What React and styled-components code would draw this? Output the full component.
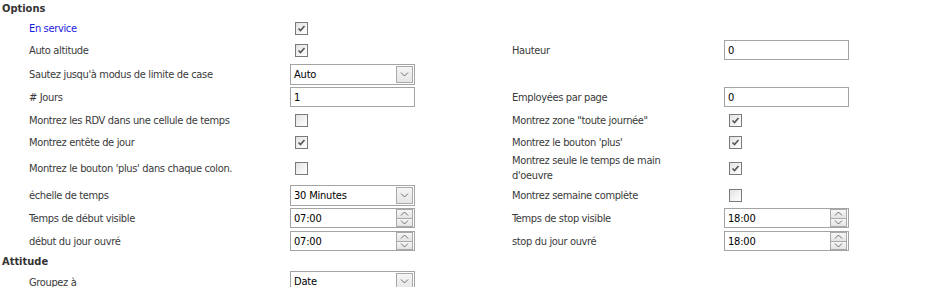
import React from 'react';
import styled, { createGlobalStyle } from 'styled-components';

const Global = createGlobalStyle`
  * { box-sizing: border-box; }
  body {
    margin: 0;
    background: #fff;
    font-family: "DejaVu Sans Condensed", "DejaVu Sans", sans-serif;
    font-size: 11px;
    letter-spacing: -0.35px;
    color: #3a3a3a;
  }
`;

const Page = styled.div`
  padding: 0 0 0 2px;
`;

const Header = styled.div`
  font-weight: bold;
  color: #333;
  letter-spacing: 0;
  height: ${p => p.h || 17}px;
  line-height: ${p => p.h || 17}px;
`;

const Grid = styled.div`
  display: grid;
  grid-template-columns: 261px 222px 212px 125px;
  padding-left: 27px;
  align-items: center;
`;

const Cell = styled.div`
  min-height: 22px;
  display: flex;
  align-items: center;
  line-height: 15px;
  color: ${p => (p.link ? '#1a1adf' : 'inherit')};
  max-width: ${p => (p.wrap ? `${p.wrap}px` : 'none')};
`;

const Box = styled.span`
  width: 13px;
  height: 13px;
  margin-left: 5px;
  border: 1px solid #7a7a7a;
  background: linear-gradient(135deg, #e2e2e2 0%, #f7f7f7 70%, #ffffff 100%);
  display: flex;
  align-items: center;
  justify-content: center;
`;

const Check = ({ on }) => (
  <Box>
    {on && (
      <svg width="9" height="9" viewBox="0 0 9 9">
        <path d="M1.5 4.5 L3.5 6.5 L7.5 2" fill="none" stroke="#555" strokeWidth="1.6" />
      </svg>
    )}
  </Box>
);

const Field = styled.div`
  width: 125px;
  height: ${p => p.h || 20}px;
  margin: ${p => p.m || '1px 0 2px'};
  border: 1px solid #a4a4a4;
  background: #fff;
  display: flex;
  align-items: center;
  justify-content: space-between;
  padding: 0 1px 0 3px;
  color: #000;
  letter-spacing: -0.2px;
`;

const ArrowBtn = styled.span`
  width: 17px;
  height: 17px;
  border: 1px solid #a9a9a9;
  background: linear-gradient(#f4f4f4, #e6e6e6);
  display: flex;
  align-items: center;
  justify-content: center;
`;

const Spin = styled.span`
  width: 17px;
  height: 18px;
  display: flex;
  flex-direction: column;
`;

const SpinHalf = styled.span`
  flex: 1;
  border: 1px solid #a9a9a9;
  border-top-width: ${p => (p.down ? 0 : 1)}px;
  background: linear-gradient(#f6f6f6, #e4e4e4);
  display: flex;
  align-items: center;
  justify-content: center;
`;

const Chevron = ({ up }) => (
  <svg width="9" height="5" viewBox="0 0 9 5">
    <path
      d={up ? 'M1 4.5 L4.5 1 L8 4.5' : 'M1 0.5 L4.5 4 L8 0.5'}
      fill="none"
      stroke="#6e6e6e"
      strokeWidth="1"
    />
  </svg>
);

const Select = ({ value, m }) => (
  <Field h={21} m={m || '2px 0 1px'}>
    <span>{value}</span>
    <ArrowBtn>
      <Chevron />
    </ArrowBtn>
  </Field>
);

const Text = ({ value }) => (
  <Field>
    <span>{value}</span>
  </Field>
);

const Time = ({ value }) => (
  <Field>
    <span>{value}</span>
    <Spin>
      <SpinHalf>
        <Chevron up />
      </SpinHalf>
      <SpinHalf down>
        <Chevron />
      </SpinHalf>
    </Spin>
  </Field>
);

const Empty = () => <Cell />;

export default function App() {
  return (
    <Page>
      <Global />
      <Header>Options</Header>
      <Grid>
        <Cell link>En service</Cell>
        <Cell><Check on /></Cell>
        <Empty />
        <Empty />

        <Cell>Auto altitude</Cell>
        <Cell><Check on /></Cell>
        <Cell>Hauteur</Cell>
        <Cell><Text value="0" /></Cell>

        <Cell>Sautez jusqu'à modus de limite de case</Cell>
        <Cell><Select value="Auto" /></Cell>
        <Empty />
        <Empty />

        <Cell># Jours</Cell>
        <Cell><Text value="1" /></Cell>
        <Cell>Employées par page</Cell>
        <Cell><Text value="0" /></Cell>

        <Cell>Montrez les RDV dans une cellule de temps</Cell>
        <Cell><Check /></Cell>
        <Cell>Montrez zone "toute journée"</Cell>
        <Cell><Check on /></Cell>

        <Cell>Montrez entête de jour</Cell>
        <Cell><Check on /></Cell>
        <Cell>Montrez le bouton 'plus'</Cell>
        <Cell><Check on /></Cell>

        <Cell>Montrez le bouton 'plus' dans chaque colon.</Cell>
        <Cell><Check /></Cell>
        <Cell wrap={185}>Montrez seule le temps de main d'oeuvre</Cell>
        <Cell><Check on /></Cell>

        <Cell>échelle de temps</Cell>
        <Cell><Select value="30 Minutes" /></Cell>
        <Cell>Montrez semaine complète</Cell>
        <Cell><Check /></Cell>

        <Cell>Temps de début visible</Cell>
        <Cell><Time value="07:00" /></Cell>
        <Cell>Temps de stop visible</Cell>
        <Cell><Time value="18:00" /></Cell>

        <Cell>début du jour ouvré</Cell>
        <Cell><Time value="07:00" /></Cell>
        <Cell>stop du jour ouvré</Cell>
        <Cell><Time value="18:00" /></Cell>
      </Grid>
      <Header h={18}>Attitude</Header>
      <Grid>
        <Cell>Groupez à</Cell>
        <Cell><Select value="Date" m="0 0 1px" /></Cell>
        <Empty />
        <Empty />
      </Grid>
    </Page>
  );
}
